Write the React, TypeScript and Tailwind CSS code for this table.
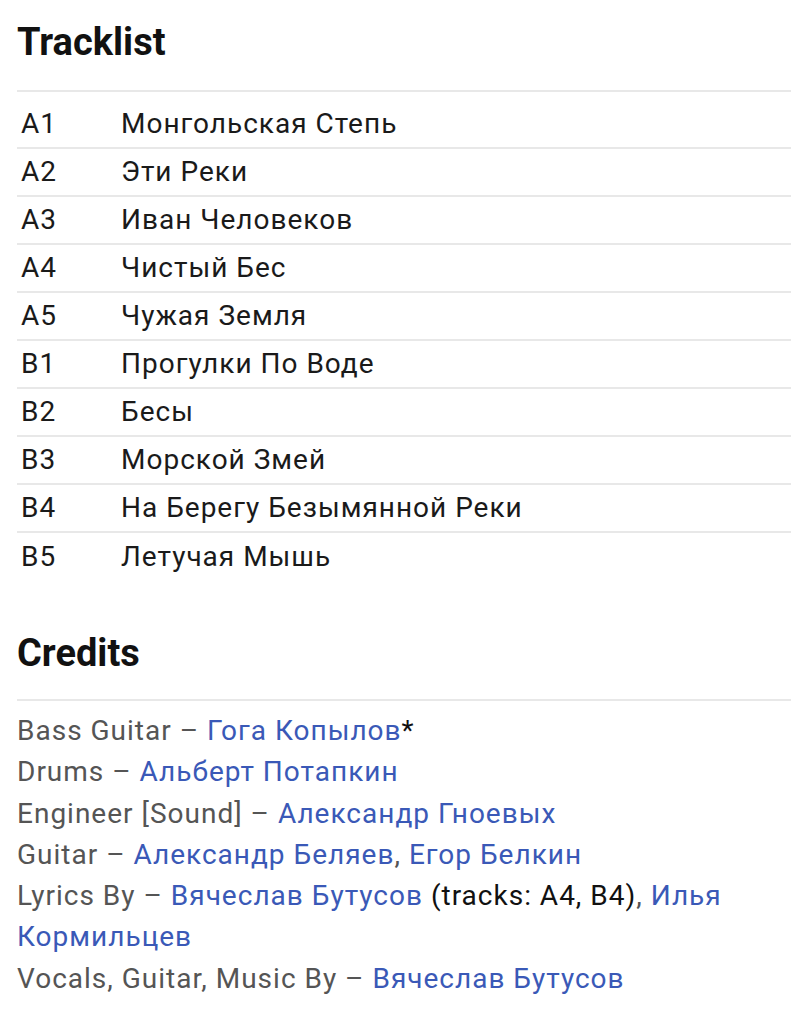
import React from "react";

const tracks: [string, string][] = [
  ["A1", "Монгольская Степь"],
  ["A2", "Эти Реки"],
  ["A3", "Иван Человеков"],
  ["A4", "Чистый Бес"],
  ["A5", "Чужая Земля"],
  ["B1", "Прогулки По Воде"],
  ["B2", "Бесы"],
  ["B3", "Морской Змей"],
  ["B4", "На Берегу Безымянной Реки"],
  ["B5", "Летучая Мышь"],
];

const L = ({ children }: { children: React.ReactNode }) => (
  <a className="text-[#3a59b7]">{children}</a>
);

export default function App() {
  return (
    <div
      className="bg-white min-h-[1024px] px-[17px] pt-[14px]"
      style={{ fontFamily: "Roboto, 'Noto Sans', sans-serif" }}
    >
      <h2 className="text-[38px] font-bold text-[#111] leading-[56px]">Tracklist</h2>
      <div className="mt-[20px] border-t-2 border-[#e8e8e8] pt-[9px]">
        {tracks.map(([n, t], i) => (
          <div
            key={n}
            className={`flex items-center h-[48px] text-[28px] tracking-[1px] text-[#1a1a1a] ${
              i < tracks.length - 1 ? "border-b-2 border-[#e8e8e8]" : ""
            }`}
          >
            <span className="w-[104px] pl-[4px]">{n}</span>
            <span>{t}</span>
          </div>
        ))}
      </div>
      <h2 className="mt-[44px] text-[38px] font-bold text-[#111] leading-[56px]">Credits</h2>
      <div className="mt-[18px] border-t-2 border-[#e8e8e8] pt-[9px] text-[28px] tracking-[1px] leading-[41.3px] text-[#555]">
        <div>
          Bass Guitar – <L>Гога Копылов</L>
          <span className="text-[#111]">*</span>
        </div>
        <div>
          Drums – <L>Альберт Потапкин</L>
        </div>
        <div>
          Engineer [Sound] – <L>Александр Гноевых</L>
        </div>
        <div>
          Guitar – <L>Александр Беляев</L>, <L>Егор Белкин</L>
        </div>
        <div>
          Lyrics By – <L>Вячеслав Бутусов</L>{" "}
          <span className="text-[#111]">(tracks: A4, B4)</span>, <L>Илья</L>{" "}
          <L>Кормильцев</L>
        </div>
        <div>
          Vocals, Guitar, Music By – <L>Вячеслав Бутусов</L>
        </div>
      </div>
    </div>
  );
}
